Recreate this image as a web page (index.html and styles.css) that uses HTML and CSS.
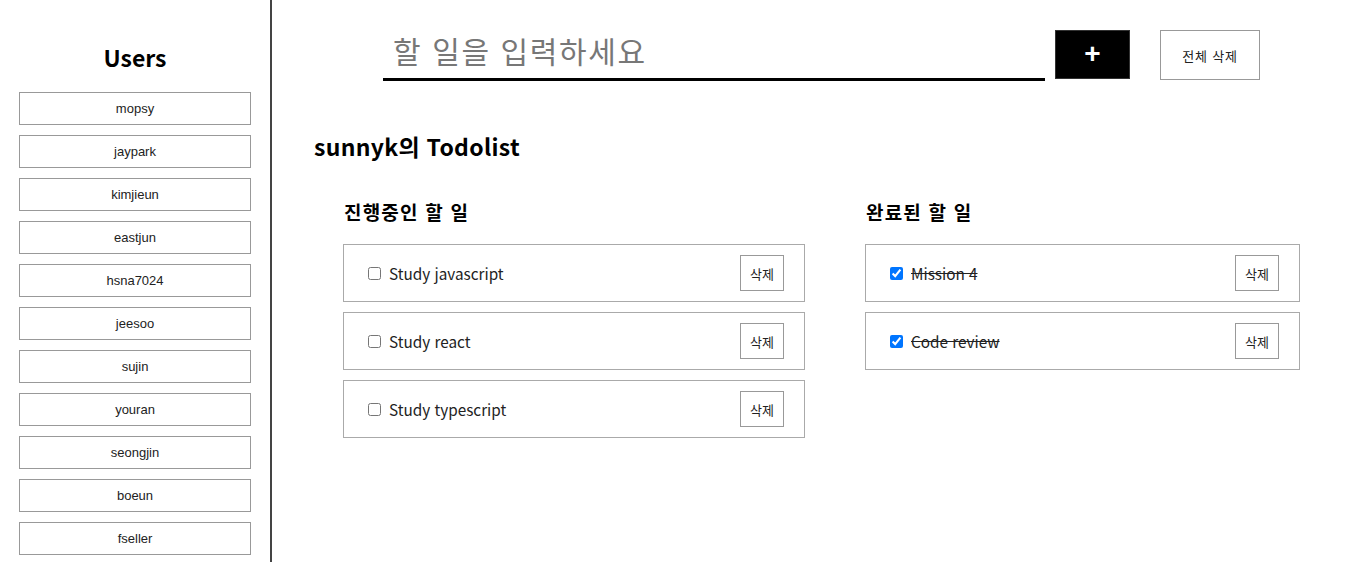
FILE: index.html
```html
<!DOCTYPE html>
<html lang="ko">
<head>
<meta charset="utf-8">
<title>Todolist</title>
<link rel="stylesheet" href="styles.css">
</head>
<body>
<div class="app">
  <aside class="sidebar">
    <h2 class="sidebar-title">Users</h2>
    <ul class="user-list">
      <li><button class="user-btn">mopsy</button></li>
      <li><button class="user-btn">jaypark</button></li>
      <li><button class="user-btn">kimjieun</button></li>
      <li><button class="user-btn">eastjun</button></li>
      <li><button class="user-btn">hsna7024</button></li>
      <li><button class="user-btn">jeesoo</button></li>
      <li><button class="user-btn">sujin</button></li>
      <li><button class="user-btn">youran</button></li>
      <li><button class="user-btn">seongjin</button></li>
      <li><button class="user-btn">boeun</button></li>
      <li><button class="user-btn">fseller</button></li>
    </ul>
  </aside>
  <main class="main">
    <form class="input-row">
      <input class="todo-input" type="text" placeholder="할 일을 입력하세요">
      <button class="add-btn" type="button">+</button>
      <button class="clear-btn" type="button">전체 삭제</button>
    </form>
    <h1 class="list-title">sunnyk의 Todolist</h1>
    <div class="columns">
      <section class="column column-left">
        <h3 class="column-title">진행중인 할 일</h3>
        <ul class="todo-list">
          <li class="todo-item"><label class="todo-label"><input type="checkbox" class="todo-check"><span>Study javascript</span></label><button class="del-btn">삭제</button></li>
          <li class="todo-item"><label class="todo-label"><input type="checkbox" class="todo-check"><span>Study react</span></label><button class="del-btn">삭제</button></li>
          <li class="todo-item"><label class="todo-label"><input type="checkbox" class="todo-check"><span>Study typescript</span></label><button class="del-btn">삭제</button></li>
        </ul>
      </section>
      <section class="column column-right">
        <h3 class="column-title">완료된 할 일</h3>
        <ul class="todo-list">
          <li class="todo-item done"><label class="todo-label"><input type="checkbox" class="todo-check" checked><span>Mission 4</span></label><button class="del-btn">삭제</button></li>
          <li class="todo-item done"><label class="todo-label"><input type="checkbox" class="todo-check" checked><span>Code review</span></label><button class="del-btn">삭제</button></li>
        </ul>
      </section>
    </div>
  </main>
</div>
</body>
</html>
```

FILE: styles.css
```css
* { box-sizing: border-box; }
html, body { margin: 0; padding: 0; background: #fff; }
body {
  font-family: "Noto Sans CJK KR", "Noto Sans", sans-serif;
  color: #000;
}
.app {
  display: flex;
  height: 562px;
  overflow: hidden;
}
.sidebar {
  width: 272px;
  flex: none;
  border-right: 2px solid #444;
  padding-top: 41px;
}
.sidebar-title {
  margin: 0 0 19px;
  text-align: center;
  font-family: "Noto Sans CJK KR", sans-serif;
  font-size: 23px;
  font-weight: 700;
  line-height: 32px;
}
.user-list {
  list-style: none;
  margin: 0;
  padding: 0 0 0 19px;
  display: flex;
  flex-direction: column;
  gap: 10px;
}
.user-btn {
  display: block;
  width: 232px;
  height: 33px;
  background: #fff;
  border: 1px solid #999;
  font-family: "Liberation Sans", Arial, sans-serif;
  font-size: 13px;
  color: #222;
  padding: 0;
}
.main {
  flex: 1;
  padding: 30px 0 0 42px;
}
.input-row {
  display: flex;
  justify-content: center;
  align-items: flex-start;
  margin: 0 0 0 -40px;
}
.todo-input {
  width: 662px;
  height: 51px;
  border: none;
  border-bottom: 3px solid #000;
  outline: none;
  padding: 0 0 9px 10px;
  font-family: "Noto Sans CJK KR", sans-serif;
  font-size: 30px;
  letter-spacing: 1.6px;
  color: #000;
  margin-right: 10px;
}
.todo-input::placeholder { color: #777; }
.add-btn {
  width: 75px;
  height: 49px;
  background: #000;
  color: #fff;
  border: 1px solid #333;
  font-family: "Liberation Sans", Arial, sans-serif;
  font-size: 28px;
  font-weight: 700;
  line-height: 1;
  padding: 0 0 2px;
  margin-right: 30px;
}
.clear-btn {
  width: 100px;
  height: 50px;
  background: #fff;
  border: 1px solid #999;
  font-family: "Noto Sans CJK KR", sans-serif;
  font-size: 13px;
  letter-spacing: 0.8px;
  color: #222;
  padding: 0;
}
.list-title {
  margin: 48px 0 0;
  font-size: 23px;
  letter-spacing: 0.3px;
  font-weight: 700;
  line-height: 34px;
}
.columns {
  display: flex;
  gap: 60px;
  padding-left: 29px;
  margin-top: 35px;
}
.column-left { width: 462px; }
.column-right { width: 435px; }
.column-title {
  margin: 0 0 18px;
  padding-left: 1px;
  font-size: 19px;
  letter-spacing: 1.2px;
  font-weight: 700;
  line-height: 28px;
}
.todo-list {
  list-style: none;
  margin: 0;
  padding: 0;
  display: flex;
  flex-direction: column;
  gap: 10px;
}
.todo-item {
  height: 58px;
  border: 1px solid #aaa;
  display: flex;
  align-items: center;
  justify-content: space-between;
  padding: 0 20px 0 24px;
}
.todo-label {
  display: flex;
  align-items: center;
  gap: 8px;
  font-size: 15.3px;
  color: #222;
}
.todo-check {
  margin: 0;
  width: 13px;
  height: 13px;
}
.done .todo-label span { text-decoration: line-through; }
.del-btn {
  width: 44px;
  height: 36px;
  background: #fff;
  border: 1px solid #999;
  font-family: "Noto Sans CJK KR", sans-serif;
  font-size: 13px;
  color: #222;
  padding: 0;
}
```
